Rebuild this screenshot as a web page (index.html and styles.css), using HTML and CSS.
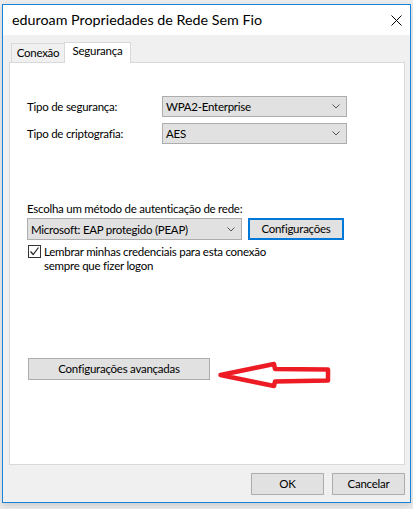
FILE: index.html
```html
<!DOCTYPE html>
<html lang="pt-BR">
<head>
<meta charset="utf-8">
<title>eduroam Propriedades de Rede Sem Fio</title>
<link rel="stylesheet" href="styles.css">
</head>
<body>
<div class="window">
  <div class="titlebar">
    <span class="title">eduroam Propriedades de Rede Sem Fio</span>
    <span class="close">
      <svg width="11" height="11" viewBox="0 0 11 11"><path d="M0.5 0.5 L10.5 10.5 M10.5 0.5 L0.5 10.5" stroke="#000" stroke-width="1" fill="none"/></svg>
    </span>
  </div>
  <div class="content">
    <div class="tabs">
      <div class="tab">Conexão</div>
      <div class="tab active">Segurança</div>
    </div>
    <div class="panel">
      <div class="form-grid">
        <span class="label">Tipo de segurança:</span>
        <div class="select"><span>WPA2-Enterprise</span><svg class="chev" width="8" height="5" viewBox="0 0 8 5"><path d="M0.5 0.5 L4 4 L7.5 0.5" stroke="#555" fill="none"/></svg></div>
        <span class="label">Tipo de criptografia:</span>
        <div class="select"><span>AES</span><svg class="chev" width="8" height="5" viewBox="0 0 8 5"><path d="M0.5 0.5 L4 4 L7.5 0.5" stroke="#555" fill="none"/></svg></div>
      </div>
      <div class="auth-label">Escolha um método de autenticação de rede:</div>
      <div class="auth-row">
        <div class="select wide"><span>Microsoft: EAP protegido (PEAP)</span><svg class="chev" width="8" height="5" viewBox="0 0 8 5"><path d="M0.5 0.5 L4 4 L7.5 0.5" stroke="#555" fill="none"/></svg></div>
        <button class="btn default">Configurações</button>
      </div>
      <div class="check-row">
        <span class="checkbox"><svg width="11" height="11" viewBox="0 0 11 11"><path d="M1.5 5.5 L4.2 8.5 L9.5 1.5" stroke="#222" stroke-width="1.2" fill="none"/></svg></span>
        <span class="check-text">Lembrar minhas credenciais para esta conexão<br>sempre que fizer logon</span>
      </div>
      <button class="btn adv">Configurações avançadas</button>
      <svg class="arrow" width="130" height="40" viewBox="210 353 130 40">
        <polygon points="220.5,375 274,364 275,369 328,369.5 328,380.5 275,381.5 274,386" fill="#fff" stroke="#ed1c24" stroke-width="4.5" stroke-linejoin="round"/>
      </svg>
    </div>
    <div class="footer">
      <button class="btn foot">OK</button>
      <button class="btn foot">Cancelar</button>
    </div>
  </div>
</div>
</body>
</html>
```
FILE: styles.css
```css
* { box-sizing: border-box; }
html, body { margin: 0; padding: 0; }
body {
  background: #ebebeb;
  font-family: "Lato", "Noto Sans", "Liberation Sans", sans-serif;
  font-size: 11.5px;
  letter-spacing: -0.25px;
  color: #000;
  width: 413px;
  height: 509px;
  overflow: hidden;
}
.window {
  margin: 4px 0 0 2px;
  width: 409px;
  height: 499px;
  border: 1px solid #1883d7;
  background: #f0f0f0;
  display: flex;
  flex-direction: column;
  box-shadow: 0 3px 6px rgba(0,0,0,0.12);
}
.titlebar {
  height: 30px;
  flex: none;
  background: #fff;
  display: flex;
  align-items: center;
  justify-content: space-between;
  padding: 0 6px 0 9px;
}
.title {
  font-size: 14.3px;
  letter-spacing: 0;
  line-height: 18px;
  padding-bottom: 1px;
}
.close {
  width: 13px;
  height: 13px;
  display: flex;
  align-items: center;
  justify-content: center;
  margin-right: 1px;
}
.content {
  flex: 1;
  display: flex;
  flex-direction: column;
}
.tabs {
  height: 27px;
  display: flex;
  align-items: flex-end;
  padding-left: 8px;
}
.tab {
  height: 19px;
  width: 54px;
  border: 1px solid #d9d9d9;
  border-bottom: none;
  background: #f0f0f0;
  text-align: center;
  line-height: 17px;
}
.tab.active {
  height: 21px;
  width: 67px;
  margin-left: -1px;
  margin-bottom: -1px;
  background: #fff;
  position: relative;
  z-index: 1;
  line-height: 16px;
}
.panel {
  position: relative;
  height: 403px;
  margin: 0 5px 0 6px;
  border: 1px solid #d9d9d9;
  background: #fff;
  padding: 33px 0 0 17px;
}
.form-grid {
  display: grid;
  grid-template-columns: 135px 185px;
  grid-auto-rows: 21px;
  row-gap: 6px;
  align-items: center;
}
.label { line-height: 15px; }
.select {
  height: 21px;
  border: 1px solid #adadad;
  background: #e1e1e1;
  display: flex;
  align-items: center;
  justify-content: space-between;
  padding: 0 6px 0 3px;
  line-height: 15px;
  white-space: nowrap;
}
.chev { flex: none; }
.auth-label {
  margin-top: 57px;
  line-height: 15px;
}
.auth-row {
  margin-top: 2px;
  display: flex;
  gap: 6px;
  height: 22px;
}
.select.wide {
  width: 215px;
  height: 22px;
}
.btn {
  font-family: inherit;
  font-size: 11.5px;
  letter-spacing: -0.25px;
  color: #000;
  background: #e1e1e1;
  border: 1px solid #adadad;
  height: 22px;
  padding: 0;
  margin: 0;
  line-height: 18px;
}
.btn.default {
  width: 96px;
  border: 2px solid #0078d7;
}
.check-row {
  margin-top: 5px;
  display: flex;
  align-items: flex-start;
  gap: 3px;
  padding-left: 1px;
}
.checkbox {
  width: 13px;
  height: 13px;
  border: 1px solid #333;
  background: #fff;
  display: flex;
  align-items: center;
  justify-content: center;
  flex: none;
}
.check-text {
  line-height: 14px;
}
.btn.adv {
  display: block;
  margin: 85px 0 0 1px;
  width: 182px;
}
.arrow {
  position: absolute;
  left: 200px;
  top: 290px;
}
.footer {
  display: flex;
  justify-content: flex-end;
  gap: 8px;
  padding: 8px 5px 0 0;
}
.btn.foot {
  width: 73px;
}
```
